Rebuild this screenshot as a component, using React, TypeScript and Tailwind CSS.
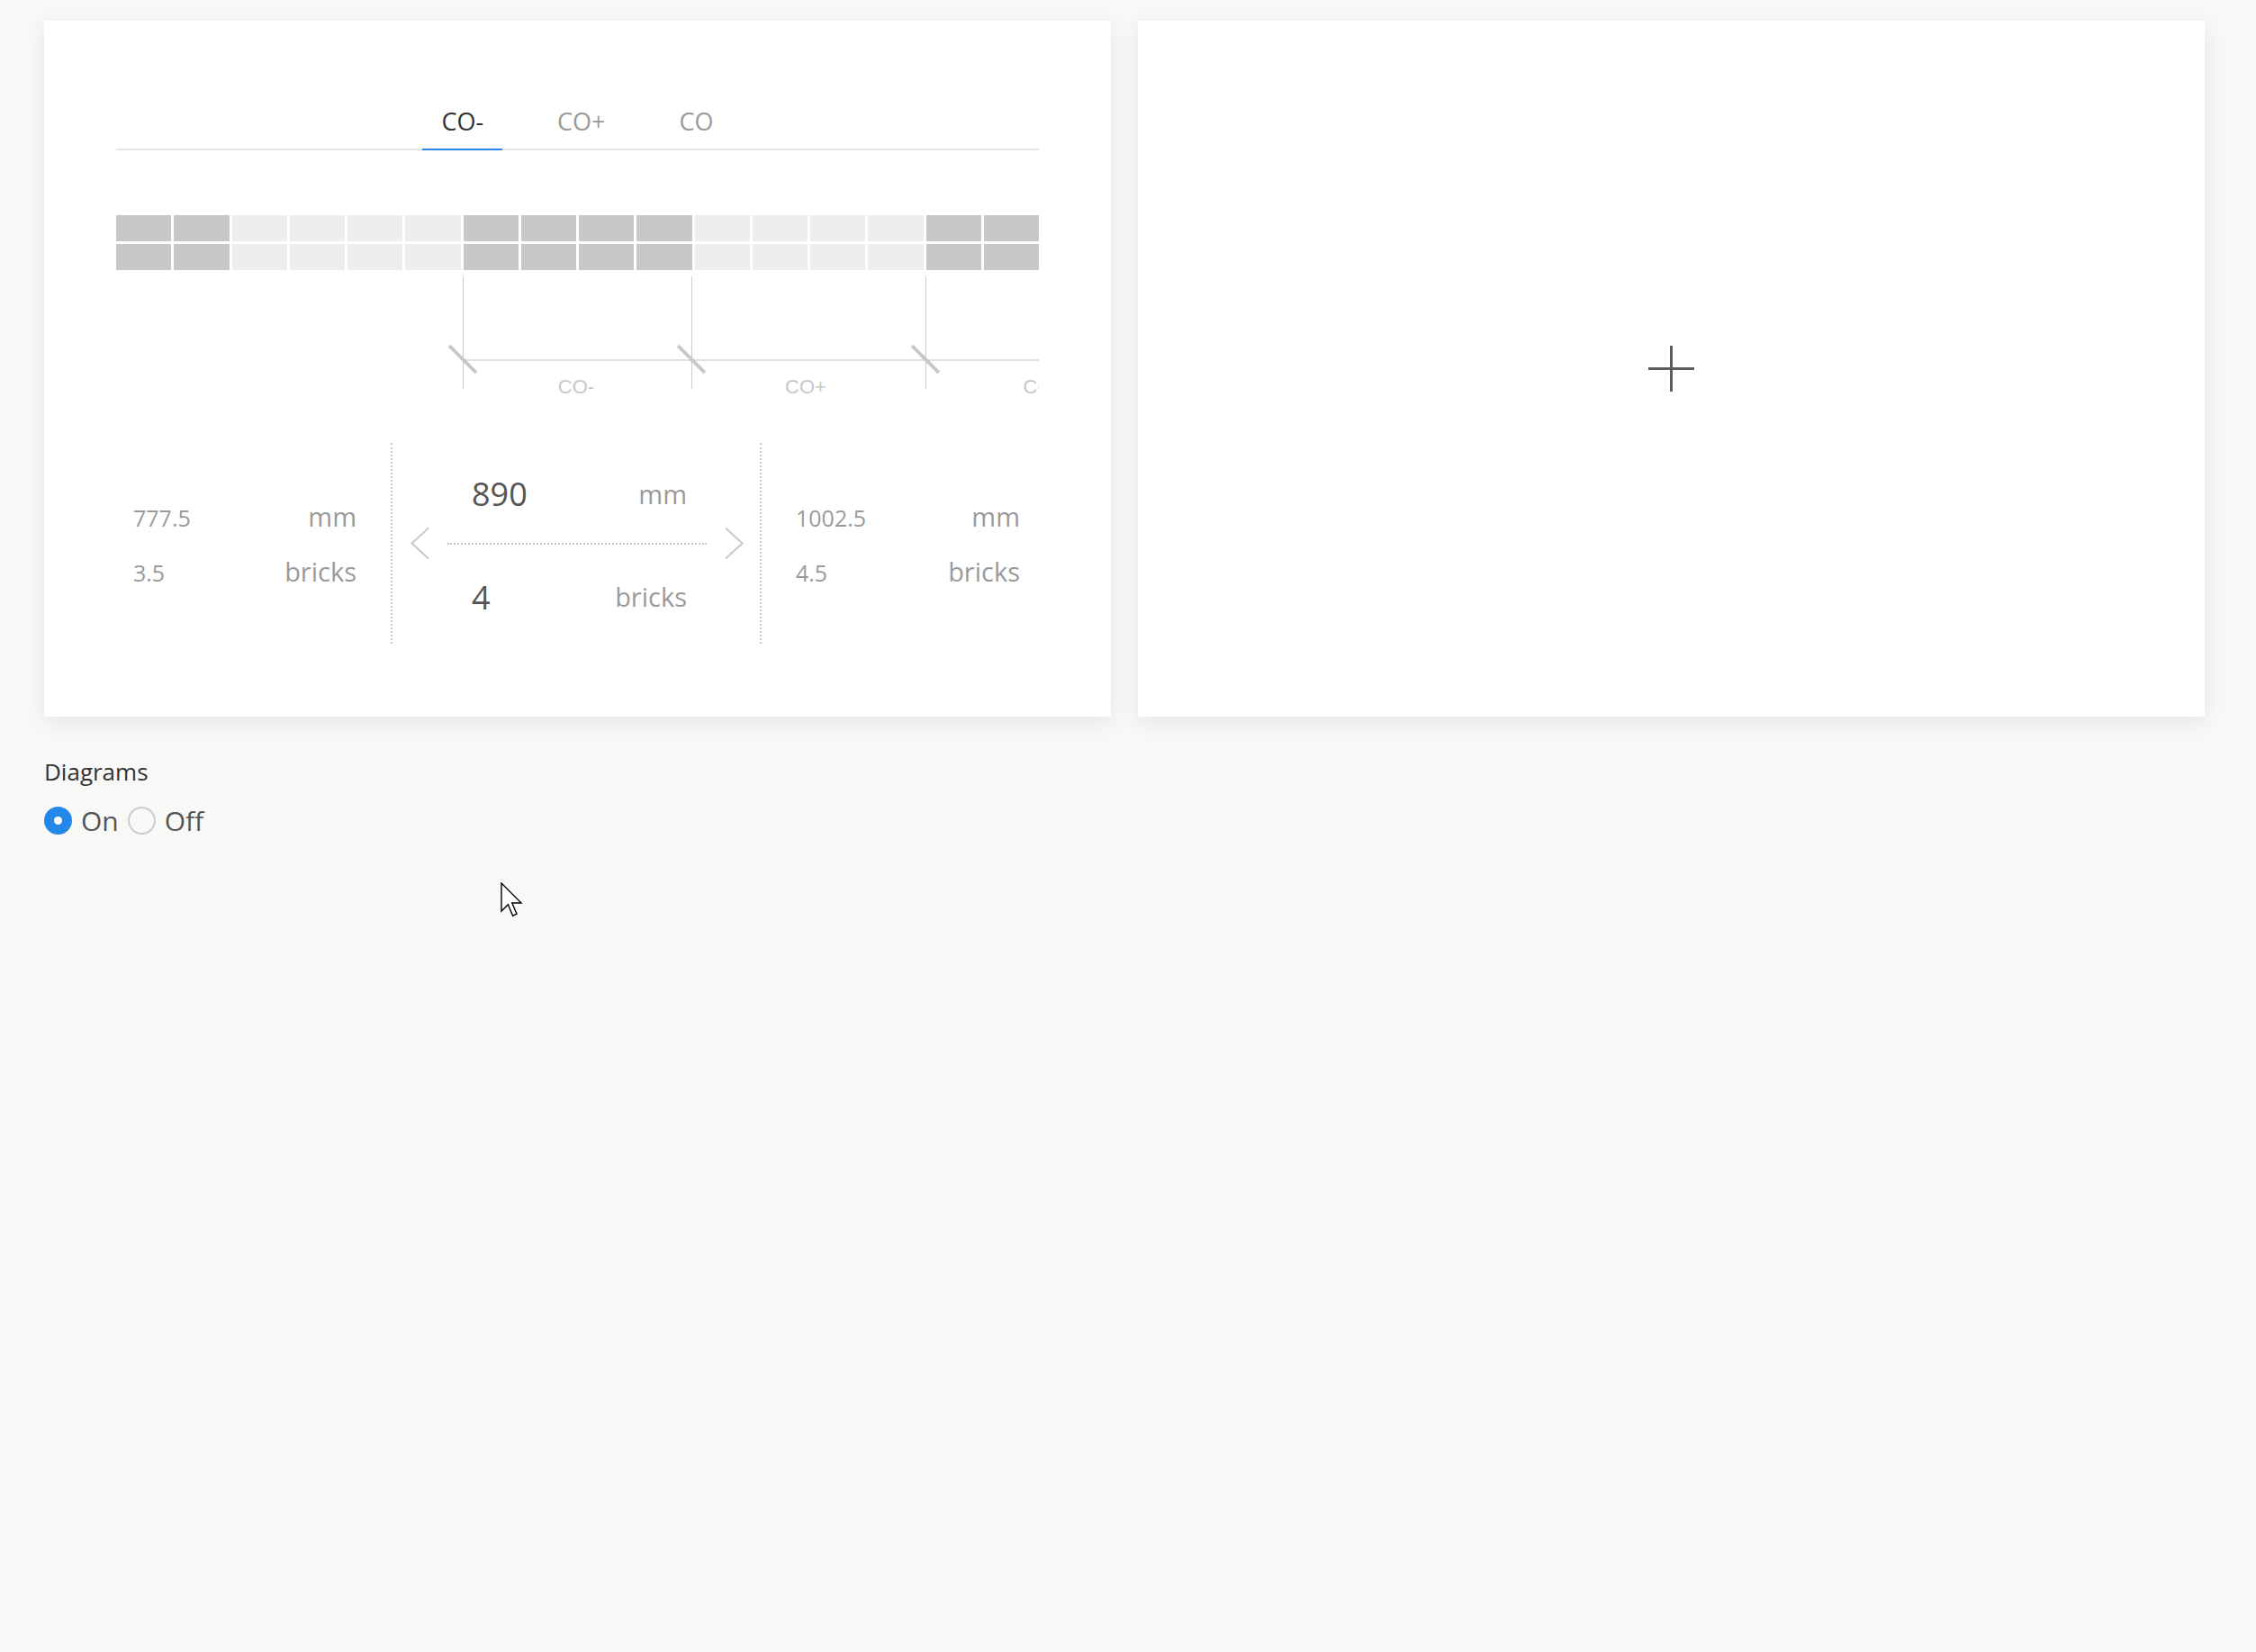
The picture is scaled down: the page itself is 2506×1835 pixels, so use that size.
import React from "react";

const bricks = [1, 1, 0, 0, 0, 0, 1, 1, 1, 1, 0, 0, 0, 0, 1, 1];

const tabs = ["CO-", "CO+", "CO"];

// course marks under the wall: vertical tick + slash
const marks = [
  { line: "left-[385px]", slash: "left-[364px]" },
  { line: "left-[639px]", slash: "left-[618px]" },
  { line: "left-[899px]", slash: "left-[878px]" },
];

const Chevron = ({ dir }: { dir: "left" | "right" }) => (
  <svg width="21" height="35" viewBox="0 0 21 35" fill="none" stroke="#c8c8c8" strokeWidth="2">
    {dir === "left" ? (
      <polyline points="20,0.5 1.5,17.5 20,34.5" />
    ) : (
      <polyline points="1,0.5 19.5,17.5 1,34.5" />
    )}
  </svg>
);

const SideStat = ({ mm, count, pad }: { mm: string; count: string; pad: string }) => (
  <div className={pad}>
    <div className="flex items-baseline justify-between leading-[59px] text-[#9a9a9a]">
      <span className="text-[25px]">{mm}</span>
      <span className="text-[29px]">mm</span>
    </div>
    <div className="flex items-baseline justify-between leading-[59px] text-[#9a9a9a]">
      <span className="text-[25px]">{count}</span>
      <span className="text-[29px]">bricks</span>
    </div>
  </div>
);

export default function App() {
  return (
    <div className="relative min-h-[1835px] bg-[#f8f8f7] pl-[49px] pt-[23px] font-['Open_Sans',sans-serif]">
      <div className="flex gap-[30px]">
        {/* Wall card */}
        <div className="h-[773px] w-[1185px] bg-white px-[80px] pt-[92px] shadow-[0_6px_22px_rgba(0,0,0,0.08)]">
          {/* Tabs */}
          <div className="flex justify-center gap-[40px] border-b-2 border-[#e5e5e5]">
            {tabs.map((t, i) => (
              <button
                key={t}
                className={
                  i === 0
                    ? "-mb-[2px] border-b-2 border-[#2b88e6] px-[21px] pb-[10px] text-[27px] leading-[40px] text-[#333333]"
                    : "-mb-[2px] border-b-2 border-transparent px-[21px] pb-[10px] text-[27px] leading-[40px] text-[#9a9a9a]"
                }
              >
                {t}
              </button>
            ))}
          </div>

          {/* Bricks */}
          <div className="mt-[72px] flex flex-col gap-[3px]">
            {[0, 1].map((row) => (
              <div key={row} className="grid h-[29px] grid-cols-16 gap-[3px]">
                {bricks.map((b, i) => (
                  <div key={i} className={b ? "bg-[#c8c8c8]" : "bg-[#eeeeee]"} />
                ))}
              </div>
            ))}
          </div>

          {/* Course diagram */}
          <div className="relative h-[142px] overflow-hidden">
            <div className="absolute left-[385px] right-0 top-[99px] h-[2px] bg-[#e0e0e0]" />
            {marks.map((m, i) => (
              <React.Fragment key={i}>
                <div className={`absolute top-[7px] h-[125px] w-px bg-[#cccccc] ${m.line}`} />
                <div className={`absolute top-[97px] h-[4px] w-[42px] rotate-45 bg-[#c8c8c8] ${m.slash}`} />
              </React.Fragment>
            ))}
            <span className="absolute left-[511px] top-[119px] -translate-x-1/2 whitespace-nowrap font-['Liberation_Sans',sans-serif] text-[22px] leading-none text-[#c8c8c8]">
              CO-
            </span>
            <span className="absolute left-[766px] top-[119px] -translate-x-1/2 whitespace-nowrap font-['Liberation_Sans',sans-serif] text-[22px] leading-none text-[#c8c8c8]">
              CO+
            </span>
            <span className="absolute left-[1024px] top-[119px] -translate-x-1/2 whitespace-nowrap font-['Liberation_Sans',sans-serif] text-[22px] leading-none text-[#c8c8c8]">
              CO
            </span>
          </div>

          {/* Dimensions */}
          <div className="mt-[50px] flex h-[223px]">
            <div className="w-[305px]">
              <SideStat mm="777.5" count="3.5" pad="pl-[19px] pr-[38px] pt-[52px]" />
            </div>

            <div className="w-[412px] border-x-2 border-dotted border-[#c8c8c8] pt-[33px]">
              <div className="flex items-baseline justify-between pl-[88px] pr-[81px] leading-[48px]">
                <span className="text-[36px] text-[#555555]">890</span>
                <span className="relative -top-[2px] text-[29px] text-[#9a9a9a]">mm</span>
              </div>
              <div className="mt-[11px] flex h-[35px] items-center gap-[20px] pl-[20px] pr-[18px]">
                <Chevron dir="left" />
                <div className="flex-1 border-t-2 border-dotted border-[#c8c8c8]" />
                <Chevron dir="right" />
              </div>
              <div className="mt-[19px] flex items-baseline justify-between pl-[88px] pr-[81px] leading-[48px]">
                <span className="text-[36px] text-[#555555]">4</span>
                <span className="relative -top-[3px] text-[29px] text-[#9a9a9a]">bricks</span>
              </div>
            </div>

            <div className="w-[308px]">
              <SideStat mm="1002.5" count="4.5" pad="pl-[38px] pr-[21px] pt-[52px]" />
            </div>
          </div>
        </div>

        {/* Empty card */}
        <div className="flex h-[773px] w-[1185px] items-center justify-center bg-white shadow-[0_6px_22px_rgba(0,0,0,0.08)]">
          <svg width="51" height="51" viewBox="0 0 51 51" stroke="#5f5c5c" strokeWidth="3">
            <line x1="25.5" y1="0" x2="25.5" y2="51" />
            <line x1="0" y1="25.5" x2="51" y2="25.5" />
          </svg>
        </div>
      </div>

      {/* Diagrams toggle */}
      <div className="mt-[44px]">
        <div className="text-[26px] leading-[34px] text-[#333333]">Diagrams</div>
        <div className="mt-[22px] flex h-[31px] items-center gap-[10px] text-[30px] text-[#555555]">
          <label className="flex items-center gap-[10px]">
            <span className="flex h-[31px] w-[31px] items-center justify-center rounded-full bg-[#2388e8]">
              <span className="h-[9px] w-[9px] rounded-full bg-white" />
            </span>
            <span>On</span>
          </label>
          <label className="flex items-center gap-[10px]">
            <span className="h-[31px] w-[31px] rounded-full border-2 border-[#cccccc]" />
            <span>Off</span>
          </label>
        </div>
      </div>

      {/* mouse pointer */}
      <svg
        className="absolute left-[556px] top-[980px]"
        width="26"
        height="40"
        viewBox="0 0 13 20"
        fill="white"
        stroke="black"
        strokeWidth="0.7"
      >
        <path d="M0.5,0.5 L0.5,16 L4.2,12.4 L6.8,18.6 L9,17.6 L6.4,11.5 L11.5,11.5 Z" />
      </svg>
    </div>
  );
}
